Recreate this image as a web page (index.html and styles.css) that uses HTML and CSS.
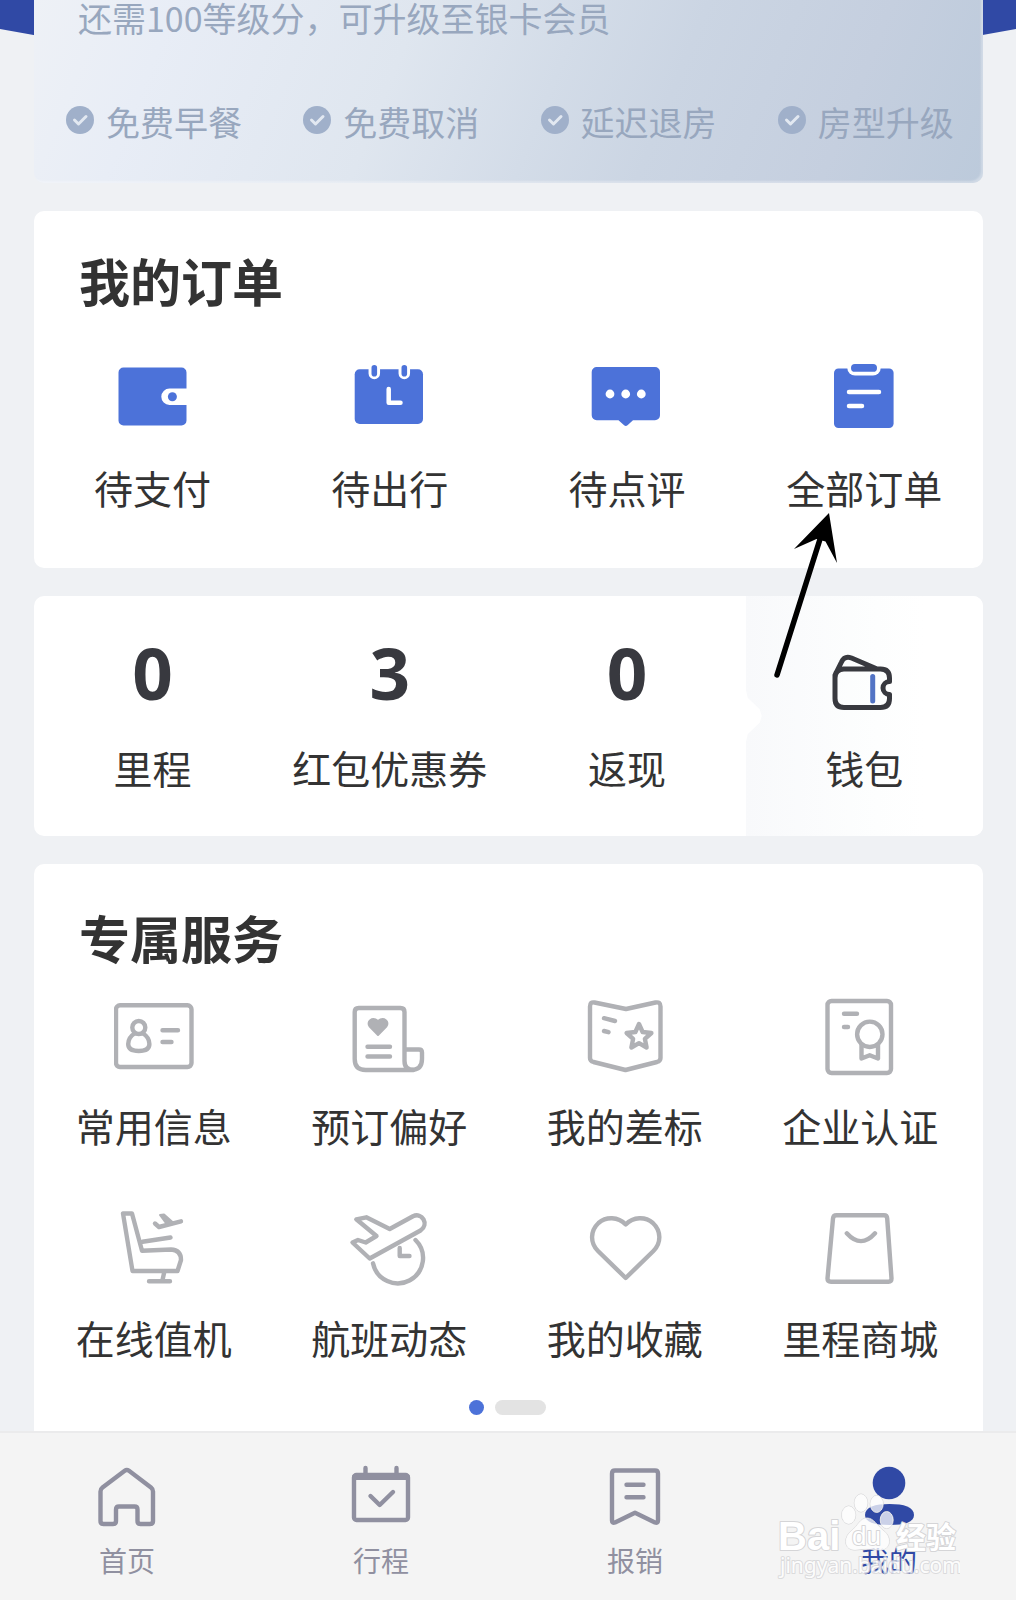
FILE: index.html
```
<!DOCTYPE html>
<html lang="zh-CN">

<head>
  <meta charset="UTF-8">
  <meta name="viewport" content="width=device-width, initial-scale=1.0">
  <title>我的</title>
  <link rel="stylesheet" href="styles.css">
</head>

<body>
  <main class="page">
    <section class="member-card">
      <p class="member-tip">还需100等级分，可升级至银卡会员</p>
      <ul class="perks">
        <li>
          <svg class="perk-icon" viewBox="0 0 28 28"><circle cx="14" cy="14" r="14" fill="#a0b0ca" /><path d="M8.5 14l4 4 7.5-7.5" /></svg>
          <span>免费早餐</span>
        </li>
        <li>
          <svg class="perk-icon" viewBox="0 0 28 28"><circle cx="14" cy="14" r="14" fill="#a0b0ca" /><path d="M8.5 14l4 4 7.5-7.5" /></svg>
          <span>免费取消</span>
        </li>
        <li>
          <svg class="perk-icon" viewBox="0 0 28 28"><circle cx="14" cy="14" r="14" fill="#a0b0ca" /><path d="M8.5 14l4 4 7.5-7.5" /></svg>
          <span>延迟退房</span>
        </li>
        <li>
          <svg class="perk-icon" viewBox="0 0 28 28"><circle cx="14" cy="14" r="14" fill="#a0b0ca" /><path d="M8.5 14l4 4 7.5-7.5" /></svg>
          <span>房型升级</span>
        </li>
      </ul>
    </section>

    <section class="card orders">
      <h2>我的订单</h2>
      <nav class="order-grid">
        <a href="#pay">
          <svg class="icon solid" viewBox="0 0 80 80">
            <path d="M10.5 11.5H68.5a5 5 0 0 1 5 5V32.5H56.5a8.2 8.2 0 0 0 0 16.4H73.5V64.5a5 5 0 0 1-5 5H10.5a5 5 0 0 1-5-5V16.5a5 5 0 0 1 5-5z" />
            <circle cx="59.4" cy="40.7" r="4.5" />
          </svg>
          <span>待支付</span>
        </a>
        <a href="#trip">
          <svg class="icon solid" viewBox="0 0 80 80">
            <rect x="4.7" y="13.3" width="68.3" height="54.7" rx="5" />
            <path class="cut" d="M24.3 12v5.5M54.3 12v5.5" stroke-width="11.5" />
            <path class="cut" d="M38.7 33v13.7H50.5" stroke-width="4.5" />
            <rect x="21.5" y="9" width="5.6" height="11.5" rx="2.8" />
            <rect x="51.5" y="9" width="5.6" height="11.5" rx="2.8" />
          </svg>
          <span>待出行</span>
        </a>
        <a href="#review">
          <svg class="icon solid" viewBox="0 0 80 80">
            <path d="M9.7 11H68a5 5 0 0 1 5 5V59.3a5 5 0 0 1-5 5H46L40.5 69.3q-1.700 1.4-3.4 0L31.5 64.3H9.7a5 5 0 0 1-5-5V16a5 5 0 0 1 5-5z" />
            <g fill="#fff"><circle cx="23" cy="38" r="4.4" /><circle cx="38.7" cy="38" r="4.4" /><circle cx="54.3" cy="38" r="4.4" /></g>
          </svg>
          <span>待点评</span>
        </a>
        <a href="#all">
          <svg class="icon solid" viewBox="0 0 80 80">
            <rect x="10" y="12.5" width="59.6" height="59.5" rx="4.5" />
            <path class="cut" d="M31 11.7H49" stroke-width="15.5" />
            <path class="cut" d="M25 36H55M25 50H38" stroke-width="4.5" />
            <rect x="27" y="8" width="26" height="7.8" rx="3.9" />
          </svg>
          <span>全部订单</span>
        </a>
      </nav>
      <svg class="pointer-arrow" viewBox="0 0 66 168">
        <path d="M3 164L47 25" stroke="#000" stroke-width="5.5" stroke-linecap="round" />
        <path d="M55 2L20 38 42.5 28 51.5 30.5 63 52z" />
      </svg>
    </section>

    <section class="card assets">
      <a href="#miles"><strong>0</strong><span>里程</span></a>
      <a href="#coupons"><strong>3</strong><span>红包优惠券</span></a>
      <a href="#cashback"><strong>0</strong><span>返现</span></a>
      <a class="wallet" href="#wallet">
        <svg class="wallet-icon" viewBox="0 0 80 84">
          <path d="M19 42H56.500q9 0 9 9v3.5a6.5 6.5 0 0 0 0 13V71.500q0 9-9 9H20q-9 0-9-9V51q0-9 9-9M11 52V48L17.5 35Q20.5 28.5 27.5 31L52 41.5" stroke="#38393f" />
          <path d="M48.7 49.5V74" stroke="#5273c4" />
        </svg>
        <span>钱包</span>
      </a>
    </section>

    <section class="card services">
      <h2>专属服务</h2>
      <nav class="service-grid">
        <a href="#profile">
          <svg class="icon line" viewBox="0 0 80 80">
            <rect x="2" y="8.3" width="75.5" height="61.7" rx="4" />
            <circle cx="24.8" cy="30.5" r="6.5" />
            <path d="M20.5 36.5q-6.3 4-6.3 10.5c0 5.5 4.8 7 10.6 7s10.6-1.5 10.6-7q0-6.5-6.3-10.5M48.5 33.3H64M48.5 45H57.5" />
          </svg>
          <span>常用信息</span>
        </a>
        <a href="#preference">
          <svg class="icon line" viewBox="0 0 80 80">
            <path d="M5.7 15q0-4 4-4H51.5q4 0 4 4V64q0 9 9 9M5.7 15V62q0 11 11 11H62q11 0 11-11V55.5q0-3-3-3H56M18.5 49.7H41M18.5 59.5H41" />
            <path d="M29 38L20.7 29.5C17 25 23 19 29 24C35 19 41 25 37.3 29.5z" fill="#b0b1b5" stroke-width="2" />
          </svg>
          <span>预订偏好</span>
        </a>
        <a href="#standard">
          <svg class="icon line" viewBox="0 0 80 80">
            <path d="M5 9.500q0-5 4.500-4L41 12 70.500 5.500q5-1 5 4V61q0 3-3.500 4L40.500 73 8.500 65Q5 64 5 61zM19 21.200L30 24M19 34L23.500 35.200" />
            <path d="M54 27L57.600 35 66.400 36 59.900 41.900 61.600 50.500 54 46.200 46.400 50.500 48.100 41.900 41.600 36 50.400 35z" />
          </svg>
          <span>我的差标</span>
        </a>
        <a href="#certify">
          <svg class="icon line" viewBox="0 0 80 80">
            <rect x="7.5" y="4" width="63.5" height="72" rx="4" />
            <circle cx="49.8" cy="37.3" r="12.7" />
            <path d="M24 16.7H37M24 30H28M41.5 48V61.5L49.7 58.3 58 61.5V48" />
          </svg>
          <span>企业认证</span>
        </a>
        <a href="#checkin">
          <svg class="icon line" viewBox="0 0 80 80">
            <path d="M9 4.5H18L28 41.7 57 40.5Q67 41 67 51L63.5 62H18.5zM28.5 32.7L56.5 28.5M50.5 62L48.5 71M35 72.3H56" />
            <path d="M41 14.5L45 18 67 12.3" />
            <path d="M46 6L50 5.5 59 13.5 53 15.5z" fill="#b0b1b5" stroke-width="2" />
          </svg>
          <span>在线值机</span>
        </a>
        <a href="#flight">
          <svg class="icon line" viewBox="0 0 80 80">
            <path d="M7.3 10.3L17.3 8.3 40.7 20 64 7.2C73 3 80.5 15 71.5 21.5L20.7 49.5 3.5 33.5 9 31 16.7 33.5 27.5 27z" />
            <path d="M24 54.3A25.3 25.3 0 1 0 66.5 31M50.7 39V47H60.5" />
          </svg>
          <span>航班动态</span>
        </a>
        <a href="#favorite">
          <svg class="icon line" viewBox="0 0 80 80">
            <path d="M40.7 15.5C33 7.5 21 7.5 13.5 14C5 22 5 34 13 42L40.7 69 68.4 42C76.4 34 76.4 22 67.9 14C60.4 7.5 48.4 7.5 40.7 15.5z" />
          </svg>
          <span>我的收藏</span>
        </a>
        <a href="#mall">
          <svg class="icon line" viewBox="0 0 80 80">
            <path d="M16.5 6.3H64Q67 6.3 67.2 9.5L71.5 69.5Q71.5 72.7 68.5 72.7H11Q7.5 72.7 7.5 69.5L13 9.5Q13.3 6.3 16.5 6.3zM26.8 24.3Q41 40 55 24.3" />
          </svg>
          <span>里程商城</span>
        </a>
      </nav>
      <div class="pager">
        <button class="pager-dot" type="button" aria-label="1"></button>
        <button class="pager-bar" type="button" aria-label="2"></button>
      </div>
    </section>
  </main>

  <nav class="tabbar">
    <a href="#home">
      <svg class="tab-icon" viewBox="0 0 64 64">
        <path d="M29.7 6.8Q31.8 5.2 34 6.8L56 23.5Q58 25 58 27.5V57q0 3-3 3H45.5q-3 0-3-3V45.5q0-3-3-3H24q-3 0-3 3V57q0 3-3 3H8.5q-3 0-3-3V27.5Q5.500 25 7.500 23.500z" />
      </svg>
      <span>首页</span>
    </a>
    <a href="#itinerary">
      <svg class="tab-icon" viewBox="0 0 64 64">
        <rect x="5" y="11" width="54" height="45" rx="2.5" />
        <path d="M6 13H58" stroke-width="6" />
        <path d="M16.5 4v6M47.5 4v6M21.5 32L30.7 41 44 28" />
      </svg>
      <span>行程</span>
    </a>
    <a href="#expense">
      <svg class="tab-icon" viewBox="0 0 64 64">
        <path d="M12 6.5H52q3 0 3 3V56.5q0 3-3 2L32 48.7 12 58.5q-3 1-3-2V9.5q0-3 3-3zM23.5 20.7H40.5M23.5 33.3H40.5" />
      </svg>
      <span>报销</span>
    </a>
    <a class="active" href="#me">
      <svg class="tab-icon" viewBox="0 0 64 64">
        <circle cx="32" cy="19" r="16.3" />
        <path d="M8 51C8 43 18 40 32.5 40S57 43 57 51C57 58 48 61 32.5 61S8 58 8 51z" />
      </svg>
      <span>我的</span>
    </a>
    <svg class="watermark" viewBox="0 0 184 88">
      <g class="paw">
        <ellipse cx="72.7" cy="23" rx="7" ry="9" />
        <ellipse cx="85" cy="11" rx="6.7" ry="9" />
        <ellipse cx="100.7" cy="12" rx="6.5" ry="8.5" />
        <ellipse cx="110.7" cy="28" rx="6.5" ry="8.5" />
        <path d="M91 26C98 26 101 34 108 39C116 45 115 58 104 58Q91 56 79 58C68 58 67 46 75 39C82 34 84 26 91 26z" />
      </g>
      <text class="wm-brand" x="2" y="58">Bai</text>
      <text class="wm-du" x="76" y="53">du</text>
      <text class="wm-cn" x="120" y="56">经验</text>
      <text class="wm-url" x="4" y="81">jingyan.baidu.com</text>
    </svg>
  </nav>
</body>

</html>
```
FILE: styles.css
```
* {
  box-sizing: border-box;
}

body {
  margin: 0;
  min-height: 100vh;
  display: flex;
  flex-direction: column;
  background: #eff1f4;
  color: #333;
  font-family: "Noto Sans CJK SC", "Noto Sans", sans-serif;
}

h2,
p,
ul {
  margin: 0;
  padding: 0;
}

a {
  color: inherit;
  text-decoration: none;
}

svg {
  display: block;
  flex: none;
}

.page {
  position: relative;
  flex: 1;
  display: flex;
  flex-direction: column;
  gap: 28px;
  padding: 0 33px 0 34px;
}

/* blue header, only its lower corners show beside the member card */
.page::before {
  content: "";
  position: absolute;
  top: 0;
  left: 0;
  right: 0;
  height: 120px;
  background: #3049a5;
  clip-path: polygon(0 0, 100% 0, 100% 29px, 50% 120px, 0 29px);
}

.member-card {
  position: relative;
  padding-bottom: 41px;
  border-radius: 0 0 10px 10px;
  background: linear-gradient(112deg, #eef1f6 0, #e8edf6 14%, #dfe6ef 38%, #d3dce8 54%, #cbd5e3 66%, #c5cfdf 84%, #bccadb 100%);
  box-shadow: inset -2px -2px 2px rgba(255, 255, 255, 0.3);
  color: #98a7be;
  font-size: 34px;
}

.member-tip {
  padding-left: 44px;
  line-height: 36px;
}

.perks {
  display: grid;
  grid-template-columns: repeat(4, 1fr);
  margin-top: 62px;
  list-style: none;
}

.perks li {
  display: flex;
  align-items: center;
  gap: 12px;
  padding-left: 32px;
  line-height: 40px;
  white-space: nowrap;
}

.perks span {
  padding-top: 4px;
}

.perk-icon {
  width: 28px;
  height: 28px;
  fill: none;
  stroke: #e2e8f1;
  stroke-width: 3;
  stroke-linecap: round;
  stroke-linejoin: round;
}

.perk-icon circle {
  stroke: none;
}

.card {
  position: relative;
  border-radius: 10px;
  background: #fff;
}

.card h2 {
  padding-left: 45px;
  font-size: 51px;
  font-weight: 700;
  line-height: 60px;
}

.card a {
  display: flex;
  flex-direction: column;
  align-items: center;
  font-size: 39px;
  line-height: 46px;
  white-space: nowrap;
}

.icon {
  width: 80px;
  height: 80px;
}

.solid {
  fill: #4c72d9;
}

.cut {
  fill: none;
  stroke: #fff;
  stroke-linecap: round;
  stroke-linejoin: round;
}

.line {
  fill: none;
  stroke: #b0b1b5;
  stroke-width: 4.4;
  stroke-linecap: round;
  stroke-linejoin: round;
}

.orders {
  padding: 39px 0 58px;
}

.order-grid {
  display: grid;
  grid-template-columns: repeat(4, 1fr);
  margin-top: 46px;
}

.order-grid a {
  gap: 28px;
}

.pointer-arrow {
  position: absolute;
  top: 300px;
  right: 143px;
  z-index: 2;
  width: 66px;
  height: 168px;
}

.assets {
  display: grid;
  grid-template-columns: repeat(4, 1fr);
  overflow: hidden;
}

.assets a {
  gap: 33px;
  padding: 31px 0 46px;
}

.assets strong {
  height: 84px;
  color: #38393f;
  font-family: "Open Sans", "Noto Sans", sans-serif;
  font-size: 71px;
  font-weight: 700;
  line-height: 92px;
}

.wallet {
  position: relative;
  background: linear-gradient(90deg, #f8f9fb, #fdfefe 55%, #fff 75%);
}

/* small tab that bites into the wallet panel */
.wallet::before {
  content: "";
  position: absolute;
  top: 50%;
  left: 0;
  width: 16px;
  height: 54px;
  transform: translateY(-50%);
  background: #fff;
  clip-path: polygon(0 0, 12% 16%, 88% 38%, 100% 50%, 88% 62%, 12% 84%, 0 100%);
}

.wallet-icon {
  width: 80px;
  height: 84px;
  fill: none;
  stroke-width: 5;
  stroke-linecap: round;
  stroke-linejoin: round;
}

.services {
  flex: 1;
  padding: 43px 5px 16px 2px;
  border-radius: 10px 10px 0 0;
}

.services h2 {
  padding-left: 43px;
}

.service-grid {
  display: grid;
  grid-template-columns: repeat(4, 1fr);
  row-gap: 61px;
  margin-top: 30px;
}

.service-grid a {
  gap: 25px;
}

.pager {
  display: flex;
  justify-content: center;
  gap: 11px;
  margin-top: 40px;
}

.pager button {
  height: 15px;
  padding: 0;
  border: 0;
  border-radius: 8px;
}

.pager .pager-dot {
  width: 15px;
  background: #4c72d9;
}

.pager .pager-bar {
  width: 51px;
  background: #e3e3e3;
}

.tabbar {
  position: relative;
  display: grid;
  grid-template-columns: repeat(4, 1fr);
  padding: 31px 0 22px;
  border-top: 2px solid #ebebec;
  background: #f4f4f4;
}

.tabbar a {
  display: flex;
  flex-direction: column;
  align-items: center;
  gap: 14px;
  color: #9090a0;
  font-size: 28px;
  line-height: 36px;
}

.tab-icon {
  width: 64px;
  height: 64px;
  fill: none;
  stroke: currentColor;
  stroke-width: 4.4;
  stroke-linecap: round;
  stroke-linejoin: round;
}

.tabbar .active {
  color: #3049a5;
}

.active .tab-icon {
  fill: currentColor;
  stroke: none;
}

.watermark {
  position: absolute;
  top: 59px;
  right: 56px;
  width: 184px;
  height: 88px;
  fill: #fff;
  stroke: #d5d5d7;
  stroke-width: 2;
  stroke-linejoin: round;
  paint-order: stroke;
  pointer-events: none;
}

.paw {
  fill: rgba(255, 255, 255, 0.75);
  stroke-width: 1;
}

.wm-brand {
  font: bold 40px "Liberation Sans", sans-serif;
}

.wm-du {
  font: 26px "Liberation Sans", sans-serif;
}

.wm-cn {
  font: bold 30px "Noto Sans CJK SC", sans-serif;
}

.wm-url {
  font: 21px "Noto Sans", sans-serif;
  opacity: 0.8;
}
```
